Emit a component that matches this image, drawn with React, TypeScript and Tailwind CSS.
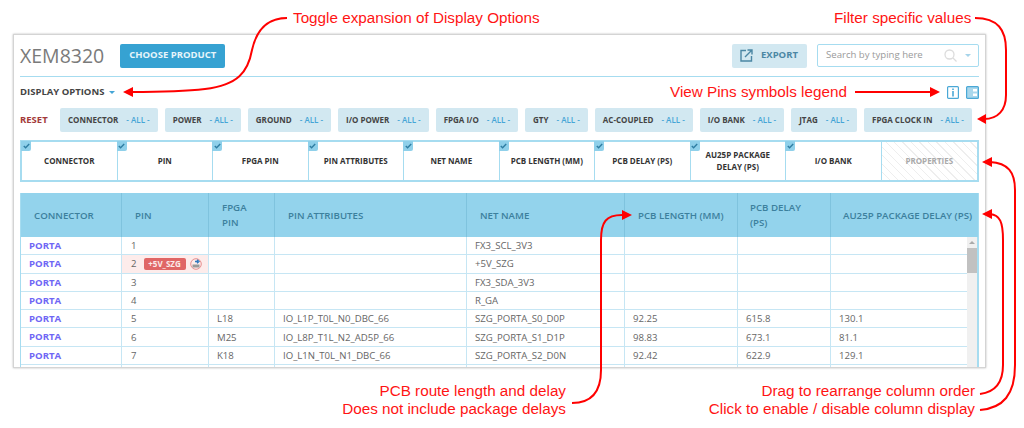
import React from "react";

const filters = [
  "CONNECTOR", "POWER", "GROUND", "I/O POWER", "FPGA I/O", "GTY", "AC-COUPLED", "I/O BANK", "JTAG", "FPGA CLOCK IN",
];

const chips = [
  "CONNECTOR", "PIN", "FPGA PIN", "PIN ATTRIBUTES", "NET NAME", "PCB LENGTH (MM)", "PCB DELAY (PS)", "AU25P PACKAGE DELAY (PS)", "I/O BANK",
];

const gridCols = "grid grid-cols-[101px_87px_66px_192px_158px_113px_93px_148px]";

const headers = [
  { t: "CONNECTOR", c: "pl-[13px]" },
  { t: "PIN", c: "pl-[13px]" },
  { t: "FPGA PIN", c: "pl-[13px] pr-5" },
  { t: "PIN ATTRIBUTES", c: "pl-[13px]" },
  { t: "NET NAME", c: "pl-[13px]" },
  { t: "PCB LENGTH (MM)", c: "pl-[13px]" },
  { t: "PCB DELAY (PS)", c: "pl-[12px] pr-5" },
  { t: "AU25P PACKAGE DELAY (PS)", c: "pl-[12px] whitespace-nowrap" },
];

const rows = [
  ["1", "", "", "FX3_SCL_3V3", "", "", ""],
  ["2", "", "", "+5V_SZG", "", "", ""],
  ["3", "", "", "FX3_SDA_3V3", "", "", ""],
  ["4", "", "", "R_GA", "", "", ""],
  ["5", "L18", "IO_L1P_T0L_N0_DBC_66", "SZG_PORTA_S0_D0P", "92.25", "615.8", "130.1"],
  ["6", "M25", "IO_L8P_T1L_N2_AD5P_66", "SZG_PORTA_S1_D1P", "98.83", "673.1", "81.1"],
  ["7", "K18", "IO_L1N_T0L_N1_DBC_66", "SZG_PORTA_S2_D0N", "92.42", "622.9", "129.1"],
];

function Check() {
  return (
    <span className="absolute -left-px -top-px flex h-[10px] w-[10px] items-center justify-center rounded-br-[2px] bg-[#8fd0ea]">
      <svg width="7" height="6" viewBox="0 0 7 6" fill="none" stroke="#2f7ea3" strokeWidth="1.4">
        <path d="M0.8 3 L2.6 4.8 L6.2 1" />
      </svg>
    </span>
  );
}

function Annotations() {
  const red = "#ff0000";
  const text = "absolute whitespace-nowrap font-['Liberation_Sans',sans-serif] text-[15.25px] leading-[18px] text-[#ff1414]";
  return (
    <>
      <svg className="pointer-events-none absolute left-0 top-0" width="1024" height="428" fill="none" stroke={red} strokeWidth="2">
        <path d="M287 18 C266 18 256 32 252 50 C248 72 238 85 205 89 C180 92 150 92 131 92" />
        <path d="M123 92 L133 87 L133 97 Z" fill={red} stroke="none" />
        <path d="M975 18 C998 18 1006 30 1006 50 L1006 95 C1006 110 998 119 984 119" />
        <path d="M977 119 L986 114 L986 124 Z" fill={red} stroke="none" />
        <path d="M855 92 L932 92" />
        <path d="M940 92 L930 87 L930 97 Z" fill={red} stroke="none" />
        <path d="M980 410 C1003 408 1015 395 1015 365 L1015 190 C1015 172 1008 163 990 162" />
        <path d="M982 162 L992 157 L992 167 Z" fill={red} stroke="none" />
        <path d="M980 394 C996 392 1003 382 1003 365 L1003 240 C1003 222 1000 215 990 214" />
        <path d="M982 214 L992 209 L992 219 Z" fill={red} stroke="none" />
        <path d="M572 403 C592 403 601 392 601 370 L601 240 C601 222 606 215 622 215" />
        <path d="M632 215 L622 210 L622 220 Z" fill={red} stroke="none" />
      </svg>
      <div className={`${text} left-[293px] top-[9px]`}>Toggle expansion of Display Options</div>
      <div className={`${text} left-[834px] top-[9px]`}>Filter specific values</div>
      <div className={`${text} left-[670px] top-[83px]`}>View Pins symbols legend</div>
      <div className={`${text} right-[458px] top-[382px] text-right`}>
        PCB route length and delay
        <br />
        Does not include package delays
      </div>
      <div className={`${text} right-[49px] top-[382px] text-right`}>
        Drag to rearrange column order
        <br />
        Click to enable / disable column display
      </div>
    </>
  );
}

export default function App() {
  return (
    <div className="relative h-[428px] w-[1024px] overflow-hidden bg-white font-['Open_Sans',sans-serif] text-[#666]">
      <div className="pt-[34px] pl-[13px]">
        <div className="h-[334px] w-[973px] overflow-hidden border border-[#d4d4d4] bg-white px-[6px] shadow-[0_0_2px_#bbb]">
          {/* Title row */}
          <div className="flex h-[42px] items-center justify-between border-b border-[#a6dcf0]">
            <div className="flex items-center gap-[16px]">
              <span className="text-[19.5px] leading-none text-[#7a7a7a]">XEM8320</span>
              <button className="flex h-6 w-[105px] items-center justify-center rounded-[2px] bg-[#36a2d2] text-[9.5px] font-bold text-[#e6f5fb]">
                CHOOSE PRODUCT
              </button>
            </div>
            <div className="flex items-center gap-[10px]">
              <div className="flex h-6 w-[75px] items-center gap-[8px] rounded-[2px] bg-[#d2e8f1] pl-2 text-[9.5px] font-bold text-[#4b87a4]">
                <svg width="13" height="13" viewBox="0 0 13 13" fill="none" stroke="#4b87a4" strokeWidth="1.4">
                  <path d="M6 1.5 H1 V12 H11.5 V7" />
                  <path d="M5 8 L12 1 M7.5 1 H12 V5.5" />
                </svg>
                EXPORT
              </div>
              <div className="flex h-[23px] w-[162px] items-center rounded-[2px] border border-[#a6dcf0] pl-2 pr-[7px] text-[9.6px] text-[#9a9a9a]">
                <span className="flex-1">Search by typing here</span>
                <svg width="13" height="13" viewBox="0 0 13 13" fill="none" stroke="#dcdcdc" strokeWidth="1.3">
                  <circle cx="5.5" cy="5.5" r="4.5" />
                  <path d="M9 9 L12.5 12.5" />
                </svg>
                <span className="ml-[8px] h-0 w-0 border-x-[3px] border-t-[3px] border-x-transparent border-t-[#a6d4ea]" />
              </div>
            </div>
          </div>

          {/* Display options */}
          <div className="flex h-[31px] items-center justify-between">
            <div className="flex items-center gap-[5px] text-[9.5px] font-bold text-[#444]">
              DISPLAY OPTIONS
              <span className="h-0 w-0 border-x-[3px] border-t-[3px] border-x-transparent border-t-[#45a5d6]" />
            </div>
            <div className="flex items-center gap-[7px]">
              <svg width="12" height="13" viewBox="0 0 12 13" fill="none" stroke="#4aa8d6" strokeWidth="1.2">
                <rect x=".6" y=".6" width="10.8" height="11.8" rx="1" />
                <path d="M6 5 V10.5" strokeWidth="1.6" />
                <path d="M6 2.5 V3.9" strokeWidth="1.6" />
              </svg>
              <svg width="13" height="13" viewBox="0 0 13 13">
                <rect x=".6" y=".6" width="11.8" height="11.8" rx="1" fill="#a9d7ec" stroke="#4aa8d6" strokeWidth="1.2" />
                <path d="M7 3 H11 V5.5 H7 Z M7 7.5 H11 V10 H7 Z" fill="#fff" />
              </svg>
            </div>
          </div>

          {/* Filters */}
          <div className="flex h-6 items-center">
            <span className="w-[40px] shrink-0 text-[9.5px] font-bold text-[#a33a3a]">RESET</span>
            <div className="flex flex-1 gap-[7px]">
              {filters.map((f) => (
                <div key={f} className="flex h-6 items-center gap-2 rounded-[2px] bg-[#d2e8f1] px-2 text-[8px] font-bold whitespace-nowrap text-[#444]">
                  <span>{f}</span>
                  <span className="font-semibold text-[#45a5d6]">- ALL -</span>
                </div>
              ))}
            </div>
          </div>

          {/* Column chips */}
          <div className="mt-2 grid h-[42px] grid-cols-10 border-2 border-[#a6dcf0]">
            {chips.map((c) => (
              <div key={c} className="relative flex items-center justify-center border-r border-[#a6dcf0] px-2 text-center text-[8px] leading-[12px] font-bold text-[#333]">
                <Check />
                {c}
              </div>
            ))}
            <div className="flex items-center justify-center bg-[repeating-linear-gradient(45deg,#fff,#fff_5px,#eee_5px,#eee_6px)] text-[8px] font-bold text-[#aaa]">
              PROPERTIES
            </div>
          </div>

          {/* Table */}
          <div className="relative mt-[11px] border-x border-[#a6dcf0]">
            <div className={`${gridCols} h-[44px] bg-[#93d3ec] text-[9.7px] leading-[15px] font-semibold text-[#3c809d]`}>
              {headers.map((h) => (
                <div key={h.t} className={`flex items-center border-r border-[#7fc3de] last:border-r-0 ${h.c}`}>
                  {h.t}
                </div>
              ))}
            </div>
            {rows.map((r) => (
              <div key={r[0]} className={`${gridCols} h-[18.3px] border-b border-[#c6e6f4] text-[9.6px] leading-[17px]`}>
                <div className="border-r border-[#c6e6f4] pl-[8px] text-[9.6px] font-bold text-[#6f66f5]">PORTA</div>
                {r.map((v, i) => (
                  <div
                    key={i}
                    className={`flex items-center border-r border-[#c6e6f4] pl-[8px] last:border-r-0 ${i === 0 && v === "2" ? "bg-[#fdeceb]" : ""}`}
                  >
                    <span className={i === 0 ? "ml-[1px]" : ""}>{v}</span>
                    {i === 0 && v === "2" && (
                      <>
                        <span className="ml-[7px] flex h-3 w-[42px] items-center justify-center rounded-[2px] bg-[#e06666] text-[8px] font-bold text-[#fbe9e9]">
                          +5V_SZG
                        </span>
                        <svg className="ml-1" width="12" height="12" viewBox="0 0 12 12" fill="none">
                          <circle cx="6" cy="6" r="5.3" stroke="#e58f8f" />
                          <path d="M2.5 6.5 H9.5 V9.5 H2.5 Z" fill="#999" />
                          <path d="M5 3.5 H8 M7 1.8 L9 3.5 L7 5.2" stroke="#2f77bd" strokeWidth="1.3" />
                        </svg>
                      </>
                    )}
                  </div>
                ))}
              </div>
            ))}
            <div className={`${gridCols} h-[18.3px] border-b border-[#c6e6f4]`}>
              {headers.map((h) => (
                <div key={h.t} className="border-r border-[#c6e6f4] last:border-r-0" />
              ))}
            </div>
            {/* Scrollbar */}
            <div className="absolute top-[44px] right-0 flex h-[160px] w-[11px] flex-col items-center border-r border-[#a6dcf0] bg-[#f0f0f0]">
              <span className="mt-1 h-0 w-0 border-x-[3px] border-b-[3px] border-x-transparent border-b-[#aaa]" />
              <span className="mt-[4px] h-[25px] w-full bg-[#c1c1c1]" />
            </div>
          </div>
        </div>
      </div>
      <Annotations />
    </div>
  );
}
